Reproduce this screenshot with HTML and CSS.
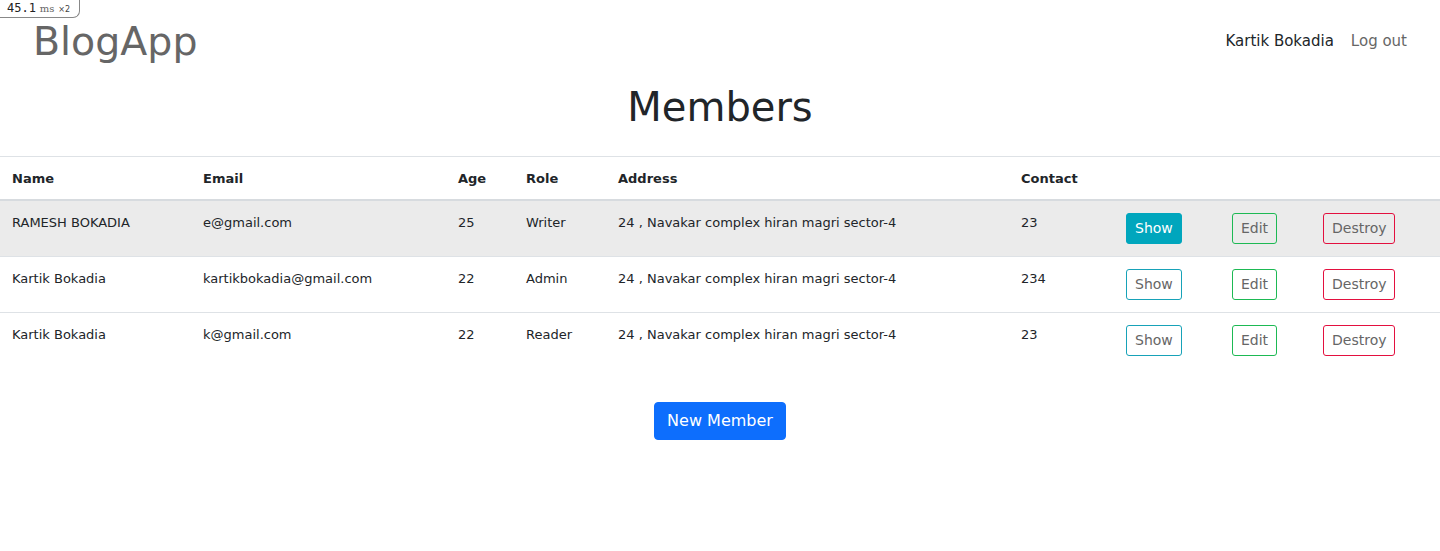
FILE: index.html
```html
<!DOCTYPE html>
<html lang="en">
<head>
<meta charset="utf-8">
<title>BlogApp</title>
<link rel="stylesheet" href="styles.css">
</head>
<body>
<div class="perf-badge"><span class="perf-num">45.1</span> <span class="perf-unit">ms</span> <span class="perf-x">×2</span></div>
<header class="topbar">
  <a class="brand" href="#">BlogApp</a>
  <nav class="user-nav">
    <a class="user-name" href="#">Kartik Bokadia</a>
    <a class="logout" href="#">Log out</a>
  </nav>
</header>
<main>
  <h1 class="page-title">Members</h1>
  <table class="members">
    <thead>
      <tr>
        <th class="c-name">Name</th>
        <th class="c-email">Email</th>
        <th class="c-age">Age</th>
        <th class="c-role">Role</th>
        <th class="c-address">Address</th>
        <th class="c-contact">Contact</th>
        <th class="c-show"></th>
        <th class="c-edit"></th>
        <th class="c-destroy"></th>
      </tr>
    </thead>
    <tbody>
      <tr class="active">
        <td>RAMESH BOKADIA</td>
        <td>e@gmail.com</td>
        <td>25</td>
        <td>Writer</td>
        <td>24 , Navakar complex hiran magri sector-4</td>
        <td>23</td>
        <td><a class="btn btn-show filled" href="#">Show</a></td>
        <td><a class="btn btn-edit" href="#">Edit</a></td>
        <td><a class="btn btn-destroy" href="#">Destroy</a></td>
      </tr>
      <tr>
        <td>Kartik Bokadia</td>
        <td>kartikbokadia@gmail.com</td>
        <td>22</td>
        <td>Admin</td>
        <td>24 , Navakar complex hiran magri sector-4</td>
        <td>234</td>
        <td><a class="btn btn-show" href="#">Show</a></td>
        <td><a class="btn btn-edit" href="#">Edit</a></td>
        <td><a class="btn btn-destroy" href="#">Destroy</a></td>
      </tr>
      <tr class="last">
        <td>Kartik Bokadia</td>
        <td>k@gmail.com</td>
        <td>22</td>
        <td>Reader</td>
        <td>24 , Navakar complex hiran magri sector-4</td>
        <td>23</td>
        <td><a class="btn btn-show" href="#">Show</a></td>
        <td><a class="btn btn-edit" href="#">Edit</a></td>
        <td><a class="btn btn-destroy" href="#">Destroy</a></td>
      </tr>
    </tbody>
  </table>
  <div class="actions">
    <a class="btn-primary" href="#">New Member</a>
  </div>
</main>
</body>
</html>
```

FILE: styles.css
```css
* { box-sizing: border-box; }

body {
  margin: 0;
  font-family: "DejaVu Sans", Verdana, sans-serif;
  color: #212529;
  background: #fff;
}

a { text-decoration: none; }

.perf-badge {
  position: absolute;
  left: 0;
  top: 0;
  height: 18px;
  width: 80px;
  padding: 0 0 0 7px;
  border: 1px solid #888;
  border-top: none;
  border-left: none;
  border-bottom-right-radius: 7px;
  background: #fff;
  font-size: 12px;
  line-height: 16px;
  color: #222;
  white-space: nowrap;
}
.perf-num { font-family: "DejaVu Sans Mono", monospace; font-size: 12px; }
.perf-unit { font-family: "DejaVu Serif", serif; font-size: 10px; color: #666; }
.perf-x { font-family: "DejaVu Sans", sans-serif; font-size: 8px; color: #444; }

.topbar {
  display: flex;
  justify-content: space-between;
  align-items: center;
  padding: 18px 33px 0 33px;
}

.brand {
  font-size: 39.5px;
  line-height: 47px;
  color: #666;
}

.user-nav {
  display: flex;
  gap: 17px;
  font-size: 15px;
  line-height: 22px;
  margin-top: -2px;
}
.user-name { color: #212529; }
.logout { color: #666; }

.page-title {
  margin: 18px 0 25px;
  text-align: center;
  font-size: 40px;
  line-height: 48px;
  font-weight: 400;
  color: #212529;
}

.members {
  width: 100%;
  border-collapse: collapse;
  font-size: 13px;
  line-height: 19px;
  border-top: 1px solid #dee2e6;
}

.members th,
.members td {
  padding: 12px;
  text-align: left;
  vertical-align: top;
}

.members th {
  padding-bottom: 11px;
  font-weight: 700;
  border-bottom: 2px solid #d7dbdf;
}

.members td { border-bottom: 1px solid #dee2e6; }
.members tr.last td { border-bottom: none; }
.members tr.active td { background: #ebebeb; }

.c-name { width: 191px; }
.c-email { width: 255px; }
.c-age { width: 68px; }
.c-role { width: 92px; }
.c-address { width: 403px; }
.c-contact { width: 105px; }
.c-show { width: 106px; }
.c-edit { width: 91px; }
.c-destroy { width: 129px; }

.btn {
  display: inline-block;
  padding: 4px 8px;
  font-size: 14px;
  line-height: 21px;
  color: #666;
  background: transparent;
  border: 1px solid;
  border-radius: 3px;
}
.btn-show { border-color: #17a2b8; }
.btn-show.filled { background: #00a6bd; border-color: #00a6bd; color: #fff; }
.btn-edit { border-color: #1db954; }
.btn-destroy { border-color: #e3103f; }

.actions {
  display: flex;
  justify-content: center;
  margin-top: 34px;
}

.btn-primary {
  display: inline-block;
  padding: 6px 12px;
  font-size: 16px;
  line-height: 24px;
  color: #fff;
  background: #0d6efd;
  border: 1px solid #0d6efd;
  border-radius: 4px;
}
```
